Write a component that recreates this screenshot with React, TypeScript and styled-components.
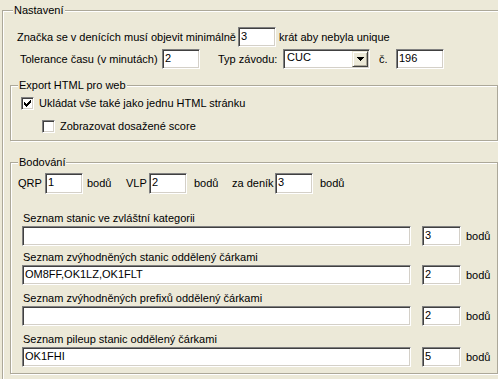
import React from 'react'
import styled, { createGlobalStyle } from 'styled-components'

const Global = createGlobalStyle`
  html, body {
    margin: 0;
    padding: 0;
    background: #ece9d8;
    overflow: hidden;
  }
  body {
    font-family: "Liberation Sans", Arial, sans-serif;
    font-size: 11px;
    color: #000;
  }
`

const Page = styled.div`
  width: 498px;
  height: 379px;
  padding: 4px 0 0 2px;
  box-sizing: border-box;
  overflow: hidden;
`

const Group = styled.fieldset<{ $w: number; $mt?: number; $h?: number }>`
  margin: ${p => p.$mt || 0}px 0 0 0;
  padding: 0;
  min-width: 0;
  width: ${p => p.$w}px;
  ${p => (p.$h ? `height: ${p.$h}px;` : '')}
  flex: none;
  box-sizing: border-box;
  border: 1px solid #aca899;
  box-shadow: inset 1px 1px 0 #fff, 1px 1px 0 #fff;
`

const Legend = styled.legend<{ $ml: number }>`
  margin-left: ${p => p.$ml}px;
  padding: 0 1px;
  line-height: 13px;
  height: 13px;
  background: #ece9d8;
`

const Body = styled.div<{ $pad: string }>`
  padding: ${p => p.$pad};
  display: flex;
  flex-direction: column;
`

const Row = styled.div<{ $mt?: number; $ml?: number; $h?: number }>`
  display: flex;
  align-items: center;
  height: ${p => p.$h || 20}px;
  margin-top: ${p => p.$mt || 0}px;
  margin-left: ${p => p.$ml || 0}px;
  white-space: nowrap;
`

const Text = styled.span<{ $w?: number; $ml?: number }>`
  display: inline-block;
  line-height: 13px;
  ${p => (p.$w ? `width: ${p.$w}px;` : '')}
  margin-left: ${p => p.$ml || 0}px;
  flex: none;
`

const Edit = styled.input<{ $w: number; $h?: number; $ml?: number }>`
  width: ${p => p.$w}px;
  height: ${p => p.$h || 20}px;
  margin: 0 0 0 ${p => p.$ml || 0}px;
  padding: 1px 0 ${p => (p.$h || 20) - 16}px 2px;
  box-sizing: border-box;
  flex: none;
  border: 1px solid;
  border-color: #808080 #fff #fff #808080;
  box-shadow: inset 1px 1px 0 #404040, inset -1px -1px 0 #d4d0c8;
  background: #fff;
  font-family: "Liberation Sans", Arial, sans-serif;
  font-size: 11px;
  line-height: 13px;
  color: #000;
  outline: none;
`

const Combo = styled.div<{ $w: number }>`
  width: ${p => p.$w}px;
  height: 20px;
  box-sizing: border-box;
  flex: none;
  display: flex;
  align-items: stretch;
  border: 1px solid;
  border-color: #808080 #fff #fff #808080;
  box-shadow: inset 1px 1px 0 #404040, inset -1px -1px 0 #d4d0c8;
  background: #fff;
  padding: 1px;
`

const ComboText = styled.span`
  flex: 1;
  padding: 0 0 0 2px;
  line-height: 13px;
`

const ComboButton = styled.span`
  width: 16px;
  box-sizing: border-box;
  background: #ece9d8;
  border: 1px solid;
  border-color: #ece9d8 #404040 #404040 #ece9d8;
  box-shadow: inset 1px 1px 0 #fff, inset -1px -1px 0 #aca899;
  display: flex;
  align-items: center;
  justify-content: center;
`

const Check = styled.span`
  width: 13px;
  height: 13px;
  box-sizing: border-box;
  flex: none;
  border: 1px solid;
  border-color: #808080 #fff #fff #808080;
  box-shadow: inset 1px 1px 0 #404040, inset -1px -1px 0 #d4d0c8;
  background: #fff;
  display: flex;
  align-items: center;
  justify-content: center;
`

const Item = styled.div<{ $mt: number }>`
  display: flex;
  flex-direction: column;
  margin: ${p => p.$mt}px 0 0 4px;
`

const ItemLabel = styled.div`
  line-height: 13px;
  height: 13px;
  padding-left: 1px;
`

const CheckMark = () => (
  <svg width="7" height="7" viewBox="0 0 7 7" shapeRendering="crispEdges">
    <path
      fill="#000"
      d="M6 0h1v3h-1zM5 1h1v3h-1zM4 2h1v3h-1zM0 2h1v3h-1zM1 3h1v3h-1zM2 4h1v3h-1zM3 3h1v3h-1z"
    />
  </svg>
)

const Arrow = () => (
  <svg width="7" height="4" viewBox="0 0 7 4" shapeRendering="crispEdges">
    <path fill="#000" d="M0 0h7v1h-7zM1 1h5v1h-5zM2 2h3v1h-3zM3 3h1v1h-1z" />
  </svg>
)

const lists = [
  { label: 'Seznam stanic ve zvláštní kategorii', value: '', pts: '3', mt: 18 },
  { label: 'Seznam zvýhodněných stanic oddělený čárkami', value: 'OM8FF,OK1LZ,OK1FLT', pts: '2', mt: 5 },
  { label: 'Seznam zvýhodněných prefixů oddělený čárkami', value: '', pts: '2', mt: 7 },
  { label: 'Seznam pileup stanic oddělený čárkami', value: 'OK1FHI', pts: '5', mt: 7 },
]

export default function App() {
  return (
    <Page>
      <Global />
      <Group $w={540} $h={420}>
        <Legend $ml={10}>Nastavení</Legend>
        <Body $pad="10px 0 0 7px">
          <Row $ml={7}>
            <Text $w={221}>Značka se v denících musí objevit minimálně</Text>
            <Edit $w={38} value="3" readOnly />
            <Text $ml={3}>krát aby nebyla unique</Text>
          </Row>
          <Row $ml={10} $mt={2}>
            <Text $w={142}>Tolerance času (v minutách)</Text>
            <Edit $w={38} value="2" readOnly />
            <Text $ml={18} $w={65}>Typ závodu:</Text>
            <Combo $w={87}>
              <ComboText>CUC</ComboText>
              <ComboButton>
                <Arrow />
              </ComboButton>
            </Combo>
            <Text $ml={9} $w={17}>č.</Text>
            <Edit $w={48} value="196" readOnly />
          </Row>

          <Group $w={488} $mt={10}>
            <Legend $ml={7}>Export HTML pro web</Legend>
            <Body $pad="5px 0 7px 10px">
              <Row $h={13}>
                <Check>
                  <CheckMark />
                </Check>
                <Text $ml={5}>Ukládat vše také jako jednu HTML stránku</Text>
              </Row>
              <Row $h={13} $mt={10} $ml={21}>
                <Check />
                <Text $ml={5}>Zobrazovat dosažené score</Text>
              </Row>
            </Body>
          </Group>

          <Group $w={488} $mt={15}>
            <Legend $ml={7}>Bodování</Legend>
            <Body $pad="4px 0 6px 7px">
              <Row $h={21}>
                <Text $w={27}>QRP</Text>
                <Edit $w={38} $h={21} value="1" readOnly />
                <Text $ml={4} $w={39}>bodů</Text>
                <Text $w={23}>VLP</Text>
                <Edit $w={38} $h={21} value="2" readOnly />
                <Text $ml={7} $w={38}>bodů</Text>
                <Text $w={43}>za deník</Text>
                <Edit $w={38} $h={21} value="3" readOnly />
                <Text $ml={7}>bodů</Text>
              </Row>
              {lists.map(l => (
                <Item key={l.label} $mt={l.mt}>
                  <ItemLabel>{l.label}</ItemLabel>
                  <Row $mt={1}>
                    <Edit $w={389} value={l.value} readOnly />
                    <Edit $w={39} $ml={11} value={l.pts} readOnly />
                    <Text $ml={5}>bodů</Text>
                  </Row>
                </Item>
              ))}
            </Body>
          </Group>
        </Body>
      </Group>
    </Page>
  )
}
